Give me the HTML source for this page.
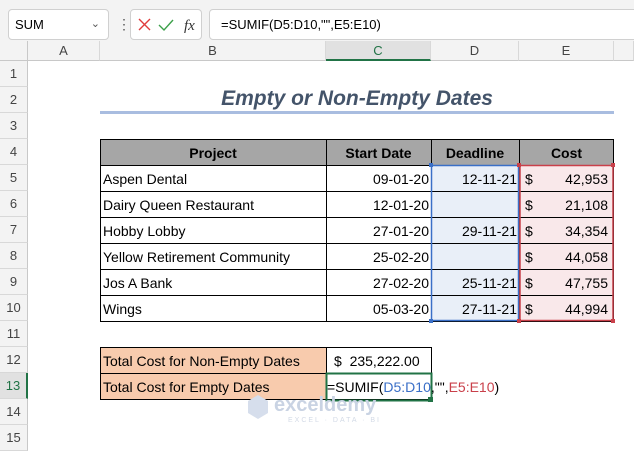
<!DOCTYPE html><html><head><style>
body{margin:0;width:634px;height:440px;background:#fff;position:relative;overflow:hidden;font-family:"Liberation Sans",sans-serif;}
.a{position:absolute;box-sizing:border-box;}
.rh{position:absolute;left:0;width:28px;height:26px;background:#f3f3f3;border-bottom:1px solid #d8d8d8;border-right:1px solid #c8c8c8;text-align:center;line-height:26px;font-size:13px;color:#444;box-sizing:border-box;}
.ch{position:absolute;top:41px;height:20px;background:#f3f3f3;border-right:1px solid #d8d8d8;border-bottom:1px solid #c8c8c8;text-align:center;line-height:20px;font-size:13px;color:#444;box-sizing:border-box;}
.c{position:absolute;height:26px;line-height:28px;font-size:14px;color:#000;box-sizing:border-box;white-space:nowrap;}
</style></head><body>
<div class="a" style="left:0;top:0;width:634px;height:41px;background:#f3f3f3"></div>
<div class="a" style="left:8px;top:9px;width:101px;height:31px;background:#fff;border:1px solid #d0d0d0;border-radius:4px;font-size:13px;line-height:29px;padding-left:6px">SUM<span style="position:absolute;right:8px;font-size:11px;color:#555">&#8964;</span></div>
<div class="a" style="left:117px;top:16px;width:3px;height:16px;color:#555;font-size:14px;line-height:16px">&#8942;</div>
<div class="a" style="left:130px;top:9px;width:72px;height:31px;background:#fff;border:1px solid #d0d0d0;border-radius:4px"></div>
<svg class="a" style="left:137px;top:17px" width="60" height="16"><path d="M2 2L13 13M13 2L2 13" stroke="#e03c3c" stroke-width="1.4"/><path d="M22 8L27 13L36 3" stroke="#3ca04a" stroke-width="1.4" fill="none"/><text x="47" y="13" font-family="Liberation Serif" font-style="italic" font-size="15" fill="#333">fx</text></svg>
<div class="a" style="left:209px;top:9px;width:430px;height:31px;background:#fff;border:1px solid #d0d0d0;border-radius:4px;font-size:13px;line-height:29px;padding-left:11px">=SUMIF(D5:D10,"",E5:E10)</div>
<div class="a" style="left:0;top:41px;width:28px;height:20px;background:#f3f3f3;border-right:1px solid #c8c8c8;border-bottom:1px solid #c8c8c8"></div>
<div class="ch" style="left:28px;width:72px">A</div>
<div class="ch" style="left:100px;width:226px">B</div>
<div class="ch" style="left:326px;width:105px;background:#e1e1e1;color:#217346;border-bottom:2px solid #217346">C</div>
<div class="ch" style="left:431px;width:88px">D</div>
<div class="ch" style="left:519px;width:95px">E</div>
<div class="ch" style="left:614px;width:20px"></div>
<div class="rh" style="top:61px">1</div><div class="rh" style="top:87px">2</div><div class="rh" style="top:113px">3</div><div class="rh" style="top:139px">4</div><div class="rh" style="top:165px">5</div><div class="rh" style="top:191px">6</div><div class="rh" style="top:217px">7</div><div class="rh" style="top:243px">8</div><div class="rh" style="top:269px">9</div><div class="rh" style="top:295px">10</div><div class="rh" style="top:321px">11</div><div class="rh" style="top:347px">12</div><div class="rh" style="top:373px;background:#e1e1e1;color:#217346;border-right:2px solid #217346">13</div><div class="rh" style="top:399px">14</div><div class="rh" style="top:425px">15</div>
<div class="a" style="left:100px;top:86px;width:514px;height:26px;text-align:center;font-size:21px;font-weight:bold;font-style:italic;color:#44546a;line-height:26px">Empty or Non-Empty Dates</div>
<div class="a" style="left:100px;top:111px;width:514px;height:3px;background:#a9bde0"></div>
<!-- table -->
<div class="a" style="left:100px;top:139px;width:514px;height:26px;background:#a6a6a6"></div>
<div class="a" style="left:431px;top:165px;width:88px;height:156px;background:#e9eff8"></div>
<div class="a" style="left:519px;top:165px;width:95px;height:156px;background:#f9e8ea"></div>
<svg class="a" style="left:0;top:0" width="634" height="440">
<g stroke="#000" stroke-width="1" fill="none">
<rect x="100.5" y="139.5" width="513" height="182"/>
<path d="M100 165.5H614M100 191.5H614M100 217.5H614M100 243.5H614M100 269.5H614M100 295.5H614M326.5 139V321M431.5 139V321M519.5 139V321"/>
<rect x="100.5" y="347.5" width="331" height="52"/><path d="M100 373.5H431M326.5 347V399"/>
</g>
<rect x="431.5" y="165.5" width="87" height="155" fill="none" stroke="#3a6fc7" stroke-width="1.5"/>
<rect x="520" y="165.5" width="93" height="155" fill="none" stroke="#c9404a" stroke-width="1.5"/>
<rect x="429" y="163" width="4" height="4" fill="#3a6fc7"/><rect x="429" y="319" width="4" height="4" fill="#3a6fc7"/><rect x="517" y="163" width="4" height="4" fill="#c9404a"/><rect x="517" y="319" width="4" height="4" fill="#c9404a"/><rect x="611" y="163" width="4" height="4" fill="#c9404a"/><rect x="611" y="319" width="4" height="4" fill="#c9404a"/>
</svg>
<div class="a" style="left:101px;top:348px;width:225px;height:51px;background:#f8cbad"></div>
<svg class="a" style="left:0;top:0" width="634" height="440"><path d="M100.5 347.5H326.5M100.5 373.5H326.5M100.5 347V399.5H326.5V347" stroke="#000" fill="none"/>
<rect x="326.5" y="373.5" width="105" height="27" fill="none" stroke="#217346" stroke-width="2"/><rect x="428" y="397" width="5" height="5" fill="#217346"/></svg>
<div class="c" style="left:100px;top:139px;width:226px;text-align:center;font-weight:bold">Project</div>
<div class="c" style="left:326px;top:139px;width:105px;text-align:center;font-weight:bold">Start Date</div>
<div class="c" style="left:431px;top:139px;width:88px;text-align:center;font-weight:bold">Deadline</div>
<div class="c" style="left:519px;top:139px;width:95px;text-align:center;font-weight:bold">Cost</div>
<div class="c" style="left:103px;top:165px">Aspen Dental</div><div class="c" style="left:103px;top:191px">Dairy Queen Restaurant</div><div class="c" style="left:103px;top:217px">Hobby Lobby</div><div class="c" style="left:103px;top:243px">Yellow Retirement Community</div><div class="c" style="left:103px;top:269px">Jos A Bank</div><div class="c" style="left:103px;top:295px">Wings</div>
<div class="c" style="left:326px;top:165px;width:103px;text-align:right">09-01-20</div><div class="c" style="left:326px;top:191px;width:103px;text-align:right">12-01-20</div><div class="c" style="left:326px;top:217px;width:103px;text-align:right">27-01-20</div><div class="c" style="left:326px;top:243px;width:103px;text-align:right">25-02-20</div><div class="c" style="left:326px;top:269px;width:103px;text-align:right">27-02-20</div><div class="c" style="left:326px;top:295px;width:103px;text-align:right">05-03-20</div>
<div class="c" style="left:431px;top:165px;width:86px;text-align:right">12-11-21</div><div class="c" style="left:431px;top:217px;width:86px;text-align:right">29-11-21</div><div class="c" style="left:431px;top:269px;width:86px;text-align:right">25-11-21</div><div class="c" style="left:431px;top:295px;width:86px;text-align:right">27-11-21</div>
<div class="c" style="left:525px;top:165px;width:83px">$<span style="float:right">42,953</span></div><div class="c" style="left:525px;top:191px;width:83px">$<span style="float:right">21,108</span></div><div class="c" style="left:525px;top:217px;width:83px">$<span style="float:right">34,354</span></div><div class="c" style="left:525px;top:243px;width:83px">$<span style="float:right">44,058</span></div><div class="c" style="left:525px;top:269px;width:83px">$<span style="float:right">47,755</span></div><div class="c" style="left:525px;top:295px;width:83px">$<span style="float:right">44,994</span></div>
<div class="c" style="left:103px;top:347px">Total Cost for Non-Empty Dates</div><div class="c" style="left:103px;top:373px">Total Cost for Empty Dates</div>
<div class="c" style="left:334px;top:347px">$&nbsp;&nbsp;235,222.00</div>
<div class="c" style="left:327px;top:373px">=SUMIF(<span style="color:#3a6fc7">D5:D10</span>,"",<span style="color:#c9404a">E5:E10</span>)</div>
<svg class="a" style="left:246px;top:393px" width="24" height="28"><path d="M12 2L22 8V20L12 26L2 20V8Z" fill="#d6deec"/></svg>
<div class="a" style="left:274px;top:394px;color:#c9d3e3;font-size:20px;font-weight:bold">exceldemy</div>
<div class="a" style="left:288px;top:417px;color:#d3dae6;font-size:7px;letter-spacing:2px">EXCEL · DATA · BI</div>
</body></html>
